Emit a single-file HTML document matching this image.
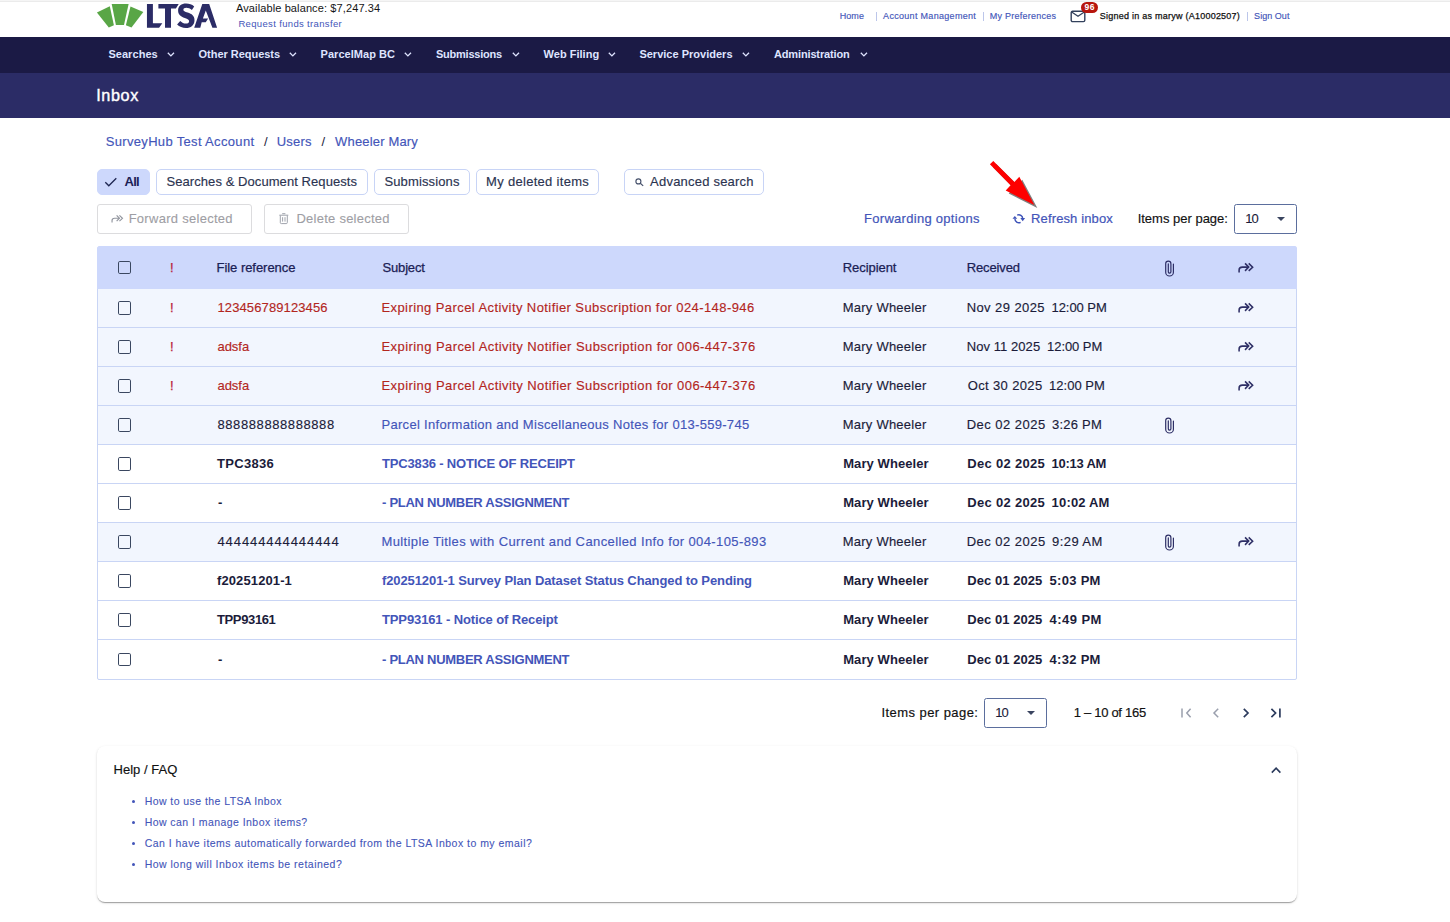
<!DOCTYPE html>
<html lang="en"><head><meta charset="utf-8"><title>Inbox</title>
<style>
html,body{margin:0;padding:0;}
body{width:1450px;height:922px;position:relative;overflow:hidden;background:#fff;font-family:"Liberation Sans",sans-serif;}
.t{position:absolute;white-space:nowrap;margin:0;padding:0;}
.a{position:absolute;box-sizing:border-box;}
svg{position:absolute;overflow:visible;}
.chip{position:absolute;box-sizing:border-box;top:169px;height:26px;border:1px solid #c8d4f6;border-radius:5px;background:#fff;}
.btn{position:absolute;box-sizing:border-box;top:204px;height:30px;border:1px solid #dcdcde;border-radius:3px;background:#fff;}
.sel{position:absolute;box-sizing:border-box;width:63px;height:30px;border:1px solid #5b6e9d;border-radius:2.5px;background:#fff;}
.cb{position:absolute;box-sizing:border-box;left:118px;width:13.4px;height:13.4px;border:1.25px solid #3a4760;border-radius:1.8px;}
.sep{position:absolute;width:1px;height:9px;top:11.5px;background:#bcc6ea;}
.row{position:absolute;left:98px;width:1198px;box-sizing:border-box;border-bottom:1px solid #c9d5f5;}

</style></head>
<body>
<div class="a" style="left:0;top:0;width:1450px;height:1px;background:#f5f5f5"></div>
<div class="a" style="left:0;top:1px;width:1450px;height:1px;background:#ebebeb"></div>
<!-- logo -->
<svg style="left:0;top:0" width="240" height="37" viewBox="0 0 240 37">
<g fill="#59a646">
<polygon points="96.9,12.4 109.8,6.3 113.9,25.3 108.8,27.5"/>
<polygon points="111.7,4.05 128.6,4.05 124.0,24.9 115.9,24.9"/>
<polygon points="130.5,6.6 143.3,12.1 131.5,27.5 125.9,25.3"/>
</g>
<g fill="#2b2c66">
<path d="M146.95,3.94 H152.9 V23.2 H162.3 L159.1,27.7 H146.95 Z"/>
<path d="M158.4,3.94 H178.7 L175.9,8.4 H171.0 V27.7 H165.0 V8.4 H158.4 Z"/>
<path id="ltsaS" d="M191.9,9.9 C190.3,8.6 188.2,7.8 186.3,7.8 C184.5,7.8 183.4,8.5 183.4,9.7 C183.4,11.1 184.8,11.6 187.6,12.6 C191.8,14 194.5,15.8 194.5,20.2 C194.5,25 190.9,28.1 185.9,28.1 C182.5,28.1 179.4,26.8 177.1,24.6 L180.2,21 C181.9,22.6 183.9,23.6 186,23.6 C187.9,23.6 189.1,22.7 189.1,21.2 C189.1,19.6 187.8,19 184.8,17.9 C180.7,16.4 178.1,14.7 178.1,10.4 C178.1,6.2 181.4,3.6 186.1,3.6 C189.2,3.6 192,4.6 194.2,6.4 Z"/>
<path d="M194.2,27.7 L202.3,3.94 H209.2 L217.1,27.7 H212.4 L205.8,10.4 L202.9,18.4 H208.1 L205.8,22.3 H201.7 L200.3,27.7 Z"/>
</g>
</svg>
<!-- header separators -->
<div class="sep" style="left:876px"></div>
<div class="sep" style="left:983px"></div>
<div class="sep" style="left:1247px"></div>
<!-- mail -->
<svg style="left:1070px;top:9.5px" width="16" height="13" viewBox="0 0 16 13">
<rect x="1.2" y="1.3" width="13.6" height="10.3" rx="1.4" fill="none" stroke="#33415c" stroke-width="1.4"/>
<path d="M1.3,1.8 L8,6.3 L14.7,1.8" fill="none" stroke="#33415c" stroke-width="1.3" stroke-linejoin="round"/>
</svg>
<div class="a" style="left:1081px;top:1.8px;width:17px;height:11px;border-radius:5.5px;background:#b7160d"></div>
<div class="t" style="left:1081px;top:1.8px;width:17px;height:11px;line-height:11px;font-size:8.5px;font-weight:700;color:#fff;text-align:center;letter-spacing:0.7px;text-indent:0.7px">96</div>
<!-- nav -->
<div class="a" style="left:0;top:37px;width:1450px;height:36px;background:#1b1a45"></div>
<div class="a" style="left:0;top:73px;width:1450px;height:45px;background:#2b2c66"></div>
<svg style="left:0;top:37px" width="900" height="36" viewBox="0 37 900 36" fill="none" stroke="#dfe4ff" stroke-width="1.3">
<path d="M167.8,52.8 l3.1,3.1 l3.1,-3.1"/>
<path d="M289.8,52.8 l3.1,3.1 l3.1,-3.1"/>
<path d="M404.8,52.8 l3.1,3.1 l3.1,-3.1"/>
<path d="M512.8,52.8 l3.1,3.1 l3.1,-3.1"/>
<path d="M608.8,52.8 l3.1,3.1 l3.1,-3.1"/>
<path d="M742.8,52.8 l3.1,3.1 l3.1,-3.1"/>
<path d="M860.8,52.8 l3.1,3.1 l3.1,-3.1"/>
</svg>
<!-- chips -->
<div class="chip" style="left:97px;width:53px;background:#cdd8fc;border-color:#cdd8fc"></div>
<svg style="left:104px;top:176px" width="14" height="12" viewBox="0 0 14 12"><path d="M1.3,6.3 L4.8,9.8 L12.3,2.3" fill="none" stroke="#1f2752" stroke-width="1.3"/></svg>
<div class="chip" style="left:156.4px;width:211.4px"></div>
<div class="chip" style="left:374.4px;width:95.4px"></div>
<div class="chip" style="left:476.4px;width:122.4px"></div>
<div class="chip" style="left:624.2px;width:139.6px"></div>
<svg style="left:634px;top:177px" width="11" height="11" viewBox="0 0 11 11" fill="none" stroke="#46516b" stroke-width="1.15"><circle cx="4.4" cy="4.4" r="2.5"/><path d="M6.3,6.3 L9.2,8.9"/></svg>
<!-- buttons -->
<div class="btn" style="left:97px;width:155px"></div>
<div class="btn" style="left:264px;width:145px"></div>
<svg style="left:110.5px;top:214px" width="15" height="11" viewBox="0 0 15 11" fill="none" stroke="#92969f" stroke-width="1.5"><g transform="translate(0.2,0.3) scale(0.77)"><path d="M1.1,10.6 V8 C1.1,6 2.4,5.1 4.4,5.1 H10.7"/><path d="M7.05,1.4 L10.7,5.1 L7.05,8.9"/><path d="M10.7,1.4 L14.65,5.2 L10.7,8.9"/></g></svg>
<svg style="left:279px;top:212.6px" width="10" height="12" viewBox="0 0 10 12" fill="none" stroke="#9fa3ac" stroke-width="1"><path d="M0.3,2.2 H9.3 M3.2,0.7 H6.4"/><path d="M1.3,2.4 V9.6 Q1.3,10.6 2.3,10.6 H7.3 Q8.3,10.6 8.3,9.6 V2.4"/><path d="M3.6,4.2 V8.6 M6,4.2 V8.6"/></svg>
<!-- refresh -->
<svg style="left:1011px;top:212px" width="16" height="14" viewBox="1011 212 16 14">
<g fill="none" stroke="#3d52b8" stroke-width="1.45"><path d="M1017.2,215.2 A3.9,3.9 0 0 1 1022.7,218.6"/><path d="M1020.6,222.3 A3.9,3.9 0 0 1 1014.9,218.8"/></g>
<g fill="#3d52b8"><polygon points="1020.3,218.1 1025.1,218.1 1022.7,221.2"/><polygon points="1012.5,218.8 1017.2,218.8 1014.8,216"/></g>
</svg>
<!-- select top -->
<div class="sel" style="left:1234px;top:204px"></div>
<svg style="left:1277px;top:216.8px" width="8" height="4" viewBox="0 0 8 4"><polygon points="0,0 8,0 4,4" fill="#3a4560"/></svg>
<!-- red arrow -->
<svg style="left:980px;top:150px;filter:drop-shadow(3px 3px 0.7px rgba(0,0,0,.5))" width="70" height="70" viewBox="980 150 70 70">
<polygon fill="#fe0000" points="993.3,161.0 1014.4,181.9 1019.3,176.8 1034.3,204.9 1005.7,190.5 1010.6,185.3 989.9,164.3"/>
</svg>
<!-- table -->
<div class="a" style="left:97px;top:246px;width:1200px;height:434px;border:1px solid #c9d5f5;border-radius:3px 3px 2px 2px;background:#fff"></div>
<div class="a" style="left:97px;top:246px;width:1200px;height:43px;background:#cdd8fc;border-radius:3px 3px 0 0;border:1px solid #cdd8fc;border-bottom:none"></div>
<div class="row" style="top:289px;height:39px;background:#f2f6fe"></div>
<div class="row" style="top:328px;height:39px;background:#f2f6fe"></div>
<div class="row" style="top:367px;height:39px;background:#f2f6fe"></div>
<div class="row" style="top:406px;height:39px;background:#f2f6fe"></div>
<div class="row" style="top:445px;height:39px;"></div>
<div class="row" style="top:484px;height:39px;"></div>
<div class="row" style="top:523px;height:39px;background:#f2f6fe"></div>
<div class="row" style="top:562px;height:39px;"></div>
<div class="row" style="top:601px;height:39px;"></div>
<!-- checkboxes -->
<div class="cb" style="top:261px"></div>
<div class="cb" style="top:301.3px"></div>
<div class="cb" style="top:340.3px"></div>
<div class="cb" style="top:379.3px"></div>
<div class="cb" style="top:418.3px"></div>
<div class="cb" style="top:457.3px"></div>
<div class="cb" style="top:496.3px"></div>
<div class="cb" style="top:535.3px"></div>
<div class="cb" style="top:574.3px"></div>
<div class="cb" style="top:613.3px"></div>
<div class="cb" style="top:653px"></div>
<!-- table icons -->
<svg style="left:0;top:0" width="1450" height="700" viewBox="0 0 1450 700" fill="none" stroke="#2e2f66">
<path transform="translate(1164,260.2)" stroke-width="1.2" stroke-linecap="round" d="M9.4,3.9 V11.95 A3.85,3.85 0 0 1 1.7,11.95 V3.5 A2.6,2.6 0 0 1 6.9,3.5 V11.6 A1.3,1.3 0 0 1 4.3,11.6 V3.6"/>
<g transform="translate(1238,262)" stroke-width="1.55"><path d="M1.1,10.6 V8 C1.1,6 2.4,5.1 4.4,5.1 H10.7"/><path d="M7.05,1.4 L10.7,5.1 L7.05,8.9"/><path d="M10.7,1.4 L14.65,5.2 L10.7,8.9"/></g>
<g transform="translate(1238,302)" stroke-width="1.55"><path d="M1.1,10.6 V8 C1.1,6 2.4,5.1 4.4,5.1 H10.7"/><path d="M7.05,1.4 L10.7,5.1 L7.05,8.9"/><path d="M10.7,1.4 L14.65,5.2 L10.7,8.9"/></g>
<g transform="translate(1238,341)" stroke-width="1.55"><path d="M1.1,10.6 V8 C1.1,6 2.4,5.1 4.4,5.1 H10.7"/><path d="M7.05,1.4 L10.7,5.1 L7.05,8.9"/><path d="M10.7,1.4 L14.65,5.2 L10.7,8.9"/></g>
<g transform="translate(1238,380)" stroke-width="1.55"><path d="M1.1,10.6 V8 C1.1,6 2.4,5.1 4.4,5.1 H10.7"/><path d="M7.05,1.4 L10.7,5.1 L7.05,8.9"/><path d="M10.7,1.4 L14.65,5.2 L10.7,8.9"/></g>
<path transform="translate(1164,417.2)" stroke-width="1.2" stroke-linecap="round" d="M9.4,3.9 V11.95 A3.85,3.85 0 0 1 1.7,11.95 V3.5 A2.6,2.6 0 0 1 6.9,3.5 V11.6 A1.3,1.3 0 0 1 4.3,11.6 V3.6"/>
<path transform="translate(1164,534.2)" stroke-width="1.2" stroke-linecap="round" d="M9.4,3.9 V11.95 A3.85,3.85 0 0 1 1.7,11.95 V3.5 A2.6,2.6 0 0 1 6.9,3.5 V11.6 A1.3,1.3 0 0 1 4.3,11.6 V3.6"/>
<g transform="translate(1238,536)" stroke-width="1.55"><path d="M1.1,10.6 V8 C1.1,6 2.4,5.1 4.4,5.1 H10.7"/><path d="M7.05,1.4 L10.7,5.1 L7.05,8.9"/><path d="M10.7,1.4 L14.65,5.2 L10.7,8.9"/></g>
</svg>
<!-- paginator -->
<div class="sel" style="left:984px;top:698px"></div>
<svg style="left:1027px;top:710.8px" width="8" height="4" viewBox="0 0 8 4"><polygon points="0,0 8,0 4,4" fill="#3a4560"/></svg>
<svg style="left:1170px;top:700px" width="120" height="26" viewBox="1170 700 120 26" fill="none" stroke-width="1.5">
<g stroke="#9a9fad"><path d="M1182,708.5 V717.4"/><path d="M1190.6,708.8 L1186.8,713 L1190.6,717.2"/><path d="M1218.2,708.8 L1214,713 L1218.2,717.2"/></g>
<g stroke="#2b3a5c" stroke-width="1.7"><path d="M1243.8,708.8 L1248,713 L1243.8,717.2"/><path d="M1271.4,708.8 L1275.6,713 L1271.4,717.2"/><path d="M1279.9,708.5 V717.4"/></g>
</svg>
<!-- FAQ -->
<div class="a" style="left:97px;top:746px;width:1200px;height:156px;border-radius:8px;background:#fff;box-shadow:0 2px 1px -1px rgba(0,0,0,.2),0 1px 1px 0 rgba(0,0,0,.14),0 1px 3px 0 rgba(0,0,0,.12)"></div>
<svg style="left:1270px;top:765px" width="12" height="10" viewBox="1270 765 12 10" fill="none" stroke="#2b3a5c" stroke-width="1.6"><path d="M1271.8,772.6 L1276.1,768.2 L1280.4,772.6"/></svg>
<div class="a" style="left:132px;top:799.6px;width:3.4px;height:3.4px;border-radius:50%;background:#4355b9"></div>
<div class="a" style="left:132px;top:820.6px;width:3.4px;height:3.4px;border-radius:50%;background:#4355b9"></div>
<div class="a" style="left:132px;top:841.6px;width:3.4px;height:3.4px;border-radius:50%;background:#4355b9"></div>
<div class="a" style="left:132px;top:862.6px;width:3.4px;height:3.4px;border-radius:50%;background:#4355b9"></div>

<div class="t" style="left:236.00px;top:0.19px;height:16px;line-height:16px;font-size:11px;color:#151515;letter-spacing:0.113px;">Available balance: $7,247.34</div>
<div class="t" style="left:238.40px;top:16.71px;height:14px;line-height:14px;font-size:9.5px;color:#4355b9;letter-spacing:0.345px;">Request funds transfer</div>
<div class="t" style="left:839.68px;top:8.88px;height:14px;line-height:14px;font-size:9px;color:#4355b9;-webkit-text-stroke:0.15px #4355b9;letter-spacing:0.080px;">Home</div>
<div class="t" style="left:883.08px;top:8.88px;height:14px;line-height:14px;font-size:9px;color:#4355b9;-webkit-text-stroke:0.15px #4355b9;letter-spacing:0.305px;">Account Management</div>
<div class="t" style="left:989.68px;top:8.88px;height:14px;line-height:14px;font-size:9px;color:#4355b9;-webkit-text-stroke:0.15px #4355b9;letter-spacing:0.255px;">My Preferences</div>
<div class="t" style="left:1099.72px;top:8.88px;height:14px;line-height:14px;font-size:9px;color:#111;-webkit-text-stroke:0.25px #111;letter-spacing:0.244px;">Signed in as maryw (A10002507)</div>
<div class="t" style="left:1254.08px;top:8.88px;height:14px;line-height:14px;font-size:9px;color:#4355b9;-webkit-text-stroke:0.15px #4355b9;letter-spacing:0.046px;">Sign Out</div>
<div class="t" style="left:108.40px;top:46.19px;height:16px;line-height:16px;font-size:11px;color:#dfe4ff;font-weight:700;letter-spacing:0.054px;">Searches</div>
<div class="t" style="left:198.60px;top:46.19px;height:16px;line-height:16px;font-size:11px;color:#dfe4ff;font-weight:700;letter-spacing:-0.031px;">Other Requests</div>
<div class="t" style="left:320.60px;top:46.19px;height:16px;line-height:16px;font-size:11px;color:#dfe4ff;font-weight:700;letter-spacing:0.033px;">ParcelMap BC</div>
<div class="t" style="left:436.00px;top:46.19px;height:16px;line-height:16px;font-size:11px;color:#dfe4ff;font-weight:700;letter-spacing:-0.235px;">Submissions</div>
<div class="t" style="left:543.60px;top:46.19px;height:16px;line-height:16px;font-size:11px;color:#dfe4ff;font-weight:700;letter-spacing:0.013px;">Web Filing</div>
<div class="t" style="left:639.40px;top:46.19px;height:16px;line-height:16px;font-size:11px;color:#dfe4ff;font-weight:700;letter-spacing:0.010px;">Service Providers</div>
<div class="t" style="left:774.00px;top:46.19px;height:16px;line-height:16px;font-size:11px;color:#dfe4ff;font-weight:700;letter-spacing:-0.147px;">Administration</div>
<div class="t" style="left:96.20px;top:82.89px;height:24px;line-height:24px;font-size:16.2px;color:#fff;-webkit-text-stroke:0.4px #fff;letter-spacing:0.621px;">Inbox</div>
<div class="t" style="left:105.67px;top:131.50px;height:20px;line-height:20px;font-size:13px;color:#4355b9;-webkit-text-stroke:0.15px #4355b9;letter-spacing:0.336px;">SurveyHub Test Account</div>
<div class="t" style="left:264.00px;top:131.50px;height:20px;line-height:20px;font-size:13px;color:#1b1c3a;letter-spacing:0.000px;">/</div>
<div class="t" style="left:276.68px;top:131.50px;height:20px;line-height:20px;font-size:13px;color:#4355b9;-webkit-text-stroke:0.15px #4355b9;letter-spacing:0.199px;">Users</div>
<div class="t" style="left:321.60px;top:131.50px;height:20px;line-height:20px;font-size:13px;color:#1b1c3a;letter-spacing:0.000px;">/</div>
<div class="t" style="left:335.07px;top:131.50px;height:20px;line-height:20px;font-size:13px;color:#4355b9;-webkit-text-stroke:0.15px #4355b9;letter-spacing:0.166px;">Wheeler Mary</div>
<div class="t" style="left:124.60px;top:172.00px;height:20px;line-height:20px;font-size:13px;color:#1b2155;font-weight:700;letter-spacing:-0.807px;">All</div>
<div class="t" style="left:166.47px;top:172.00px;height:20px;line-height:20px;font-size:13px;color:#2b3350;-webkit-text-stroke:0.15px #2b3350;letter-spacing:0.072px;">Searches &amp; Document Requests</div>
<div class="t" style="left:384.47px;top:172.00px;height:20px;line-height:20px;font-size:13px;color:#2b3350;-webkit-text-stroke:0.15px #2b3350;letter-spacing:0.125px;">Submissions</div>
<div class="t" style="left:486.07px;top:172.00px;height:20px;line-height:20px;font-size:13px;color:#2b3350;-webkit-text-stroke:0.15px #2b3350;letter-spacing:0.299px;">My deleted items</div>
<div class="t" style="left:650.08px;top:172.00px;height:20px;line-height:20px;font-size:13px;color:#2b3350;-webkit-text-stroke:0.15px #2b3350;letter-spacing:0.216px;">Advanced search</div>
<div class="t" style="left:128.65px;top:208.50px;height:20px;line-height:20px;font-size:13px;color:#9e9ea4;-webkit-text-stroke:0.1px #9e9ea4;letter-spacing:0.281px;">Forward selected</div>
<div class="t" style="left:296.45px;top:208.50px;height:20px;line-height:20px;font-size:13px;color:#9e9ea4;-webkit-text-stroke:0.1px #9e9ea4;letter-spacing:0.250px;">Delete selected</div>
<div class="t" style="left:864.10px;top:208.50px;height:20px;line-height:20px;font-size:13px;color:#4355b9;-webkit-text-stroke:0.2px #4355b9;letter-spacing:0.279px;">Forwarding options</div>
<div class="t" style="left:1031.10px;top:208.50px;height:20px;line-height:20px;font-size:13px;color:#4355b9;-webkit-text-stroke:0.2px #4355b9;letter-spacing:0.123px;">Refresh inbox</div>
<div class="t" style="left:1137.67px;top:208.50px;height:20px;line-height:20px;font-size:13px;color:#111;-webkit-text-stroke:0.15px #111;letter-spacing:-0.005px;">Items per page:</div>
<div class="t" style="left:1245.25px;top:208.50px;height:20px;line-height:20px;font-size:13px;color:#1b1c3a;-webkit-text-stroke:0.1px #1b1c3a;letter-spacing:-0.939px;">10</div>
<div class="t" style="left:170.12px;top:257.50px;height:20px;line-height:20px;font-size:13px;color:#b81c3a;-webkit-text-stroke:0.25px #b81c3a;letter-spacing:0.000px;">!</div>
<div class="t" style="left:216.53px;top:257.50px;height:20px;line-height:20px;font-size:13px;color:#1b2155;-webkit-text-stroke:0.25px #1b2155;letter-spacing:-0.039px;">File reference</div>
<div class="t" style="left:382.52px;top:257.50px;height:20px;line-height:20px;font-size:13px;color:#1b2155;-webkit-text-stroke:0.25px #1b2155;letter-spacing:-0.169px;">Subject</div>
<div class="t" style="left:842.73px;top:257.50px;height:20px;line-height:20px;font-size:13px;color:#1b2155;-webkit-text-stroke:0.25px #1b2155;letter-spacing:-0.055px;">Recipient</div>
<div class="t" style="left:966.73px;top:257.50px;height:20px;line-height:20px;font-size:13px;color:#1b2155;-webkit-text-stroke:0.25px #1b2155;letter-spacing:-0.118px;">Received</div>
<div class="t" style="left:170.12px;top:298.10px;height:20px;line-height:20px;font-size:13px;color:#b81c3a;-webkit-text-stroke:0.25px #b81c3a;letter-spacing:0.000px;">!</div>
<div class="t" style="left:217.47px;top:298.10px;height:20px;line-height:20px;font-size:13px;color:#b3261e;-webkit-text-stroke:0.15px #b3261e;letter-spacing:0.116px;">123456789123456</div>
<div class="t" style="left:381.47px;top:298.10px;height:20px;line-height:20px;font-size:13px;color:#b3261e;-webkit-text-stroke:0.15px #b3261e;letter-spacing:0.412px;">Expiring Parcel Activity Notifier Subscription for 024-148-946</div>
<div class="t" style="left:842.68px;top:298.10px;height:20px;line-height:20px;font-size:13px;color:#1b1c3a;-webkit-text-stroke:0.15px #1b1c3a;letter-spacing:0.242px;">Mary Wheeler</div>
<div class="t" style="left:966.68px;top:298.10px;height:20px;line-height:20px;font-size:13px;color:#1b1c3a;-webkit-text-stroke:0.15px #1b1c3a;letter-spacing:0.415px;">Nov 29 2025</div>
<div class="t" style="left:1051.48px;top:298.10px;height:20px;line-height:20px;font-size:13px;color:#1b1c3a;-webkit-text-stroke:0.15px #1b1c3a;letter-spacing:-0.054px;">12:00 PM</div>
<div class="t" style="left:170.12px;top:337.10px;height:20px;line-height:20px;font-size:13px;color:#b81c3a;-webkit-text-stroke:0.25px #b81c3a;letter-spacing:0.000px;">!</div>
<div class="t" style="left:217.47px;top:337.10px;height:20px;line-height:20px;font-size:13px;color:#b3261e;-webkit-text-stroke:0.15px #b3261e;letter-spacing:-0.033px;">adsfa</div>
<div class="t" style="left:381.47px;top:337.10px;height:20px;line-height:20px;font-size:13px;color:#b3261e;-webkit-text-stroke:0.15px #b3261e;letter-spacing:0.428px;">Expiring Parcel Activity Notifier Subscription for 006-447-376</div>
<div class="t" style="left:842.68px;top:337.10px;height:20px;line-height:20px;font-size:13px;color:#1b1c3a;-webkit-text-stroke:0.15px #1b1c3a;letter-spacing:0.242px;">Mary Wheeler</div>
<div class="t" style="left:966.68px;top:337.10px;height:20px;line-height:20px;font-size:13px;color:#1b1c3a;-webkit-text-stroke:0.15px #1b1c3a;letter-spacing:0.071px;">Nov 11 2025</div>
<div class="t" style="left:1047.08px;top:337.10px;height:20px;line-height:20px;font-size:13px;color:#1b1c3a;-webkit-text-stroke:0.15px #1b1c3a;letter-spacing:-0.068px;">12:00 PM</div>
<div class="t" style="left:170.12px;top:376.10px;height:20px;line-height:20px;font-size:13px;color:#b81c3a;-webkit-text-stroke:0.25px #b81c3a;letter-spacing:0.000px;">!</div>
<div class="t" style="left:217.47px;top:376.10px;height:20px;line-height:20px;font-size:13px;color:#b3261e;-webkit-text-stroke:0.15px #b3261e;letter-spacing:-0.033px;">adsfa</div>
<div class="t" style="left:381.47px;top:376.10px;height:20px;line-height:20px;font-size:13px;color:#b3261e;-webkit-text-stroke:0.15px #b3261e;letter-spacing:0.428px;">Expiring Parcel Activity Notifier Subscription for 006-447-376</div>
<div class="t" style="left:842.68px;top:376.10px;height:20px;line-height:20px;font-size:13px;color:#1b1c3a;-webkit-text-stroke:0.15px #1b1c3a;letter-spacing:0.242px;">Mary Wheeler</div>
<div class="t" style="left:967.68px;top:376.10px;height:20px;line-height:20px;font-size:13px;color:#1b1c3a;-webkit-text-stroke:0.15px #1b1c3a;letter-spacing:0.365px;">Oct 30 2025</div>
<div class="t" style="left:1049.08px;top:376.10px;height:20px;line-height:20px;font-size:13px;color:#1b1c3a;-webkit-text-stroke:0.15px #1b1c3a;letter-spacing:0.003px;">12:00 PM</div>
<div class="t" style="left:217.47px;top:415.10px;height:20px;line-height:20px;font-size:13px;color:#1b1c3a;-webkit-text-stroke:0.15px #1b1c3a;letter-spacing:0.588px;">888888888888888</div>
<div class="t" style="left:381.47px;top:415.10px;height:20px;line-height:20px;font-size:13px;color:#4355b9;-webkit-text-stroke:0.15px #4355b9;letter-spacing:0.302px;">Parcel Information and Miscellaneous Notes for 013-559-745</div>
<div class="t" style="left:842.68px;top:415.10px;height:20px;line-height:20px;font-size:13px;color:#1b1c3a;-webkit-text-stroke:0.15px #1b1c3a;letter-spacing:0.242px;">Mary Wheeler</div>
<div class="t" style="left:966.68px;top:415.10px;height:20px;line-height:20px;font-size:13px;color:#1b1c3a;-webkit-text-stroke:0.15px #1b1c3a;letter-spacing:0.475px;">Dec 02 2025</div>
<div class="t" style="left:1052.08px;top:415.10px;height:20px;line-height:20px;font-size:13px;color:#1b1c3a;-webkit-text-stroke:0.15px #1b1c3a;letter-spacing:0.210px;">3:26 PM</div>
<div class="t" style="left:217.00px;top:454.10px;height:20px;line-height:20px;font-size:13px;color:#1b1c3a;font-weight:700;letter-spacing:0.318px;">TPC3836</div>
<div class="t" style="left:382.00px;top:454.10px;height:20px;line-height:20px;font-size:13px;color:#4355b9;font-weight:700;letter-spacing:-0.160px;">TPC3836 - NOTICE OF RECEIPT</div>
<div class="t" style="left:843.20px;top:454.10px;height:20px;line-height:20px;font-size:13px;color:#1b1c3a;font-weight:700;letter-spacing:0.083px;">Mary Wheeler</div>
<div class="t" style="left:967.20px;top:454.10px;height:20px;line-height:20px;font-size:13px;color:#1b1c3a;font-weight:700;letter-spacing:0.318px;">Dec 02 2025</div>
<div class="t" style="left:1051.60px;top:454.10px;height:20px;line-height:20px;font-size:13px;color:#1b1c3a;font-weight:700;letter-spacing:-0.254px;">10:13 AM</div>
<div class="t" style="left:218.10px;top:493.10px;height:20px;line-height:20px;font-size:13px;color:#1b1c3a;font-weight:700;letter-spacing:0.000px;">-</div>
<div class="t" style="left:382.00px;top:493.10px;height:20px;line-height:20px;font-size:13px;color:#4355b9;font-weight:700;letter-spacing:-0.272px;">- PLAN NUMBER ASSIGNMENT</div>
<div class="t" style="left:843.20px;top:493.10px;height:20px;line-height:20px;font-size:13px;color:#1b1c3a;font-weight:700;letter-spacing:0.083px;">Mary Wheeler</div>
<div class="t" style="left:967.20px;top:493.10px;height:20px;line-height:20px;font-size:13px;color:#1b1c3a;font-weight:700;letter-spacing:0.318px;">Dec 02 2025</div>
<div class="t" style="left:1051.60px;top:493.10px;height:20px;line-height:20px;font-size:13px;color:#1b1c3a;font-weight:700;letter-spacing:0.174px;">10:02 AM</div>
<div class="t" style="left:217.47px;top:532.10px;height:20px;line-height:20px;font-size:13px;color:#1b1c3a;-webkit-text-stroke:0.15px #1b1c3a;letter-spacing:0.909px;">444444444444444</div>
<div class="t" style="left:381.47px;top:532.10px;height:20px;line-height:20px;font-size:13px;color:#4355b9;-webkit-text-stroke:0.15px #4355b9;letter-spacing:0.388px;">Multiple Titles with Current and Cancelled Info for 004-105-893</div>
<div class="t" style="left:842.68px;top:532.10px;height:20px;line-height:20px;font-size:13px;color:#1b1c3a;-webkit-text-stroke:0.15px #1b1c3a;letter-spacing:0.242px;">Mary Wheeler</div>
<div class="t" style="left:966.68px;top:532.10px;height:20px;line-height:20px;font-size:13px;color:#1b1c3a;-webkit-text-stroke:0.15px #1b1c3a;letter-spacing:0.475px;">Dec 02 2025</div>
<div class="t" style="left:1052.08px;top:532.10px;height:20px;line-height:20px;font-size:13px;color:#1b1c3a;-webkit-text-stroke:0.15px #1b1c3a;letter-spacing:0.413px;">9:29 AM</div>
<div class="t" style="left:217.00px;top:571.10px;height:20px;line-height:20px;font-size:13px;color:#1b1c3a;font-weight:700;letter-spacing:0.110px;">f20251201-1</div>
<div class="t" style="left:382.00px;top:571.10px;height:20px;line-height:20px;font-size:13px;color:#4355b9;font-weight:700;letter-spacing:-0.101px;">f20251201-1 Survey Plan Dataset Status Changed to Pending</div>
<div class="t" style="left:843.20px;top:571.10px;height:20px;line-height:20px;font-size:13px;color:#1b1c3a;font-weight:700;letter-spacing:0.083px;">Mary Wheeler</div>
<div class="t" style="left:967.20px;top:571.10px;height:20px;line-height:20px;font-size:13px;color:#1b1c3a;font-weight:700;letter-spacing:0.068px;">Dec 01 2025</div>
<div class="t" style="left:1049.60px;top:571.10px;height:20px;line-height:20px;font-size:13px;color:#1b1c3a;font-weight:700;letter-spacing:0.281px;">5:03 PM</div>
<div class="t" style="left:217.00px;top:610.10px;height:20px;line-height:20px;font-size:13px;color:#1b1c3a;font-weight:700;letter-spacing:-0.373px;">TPP93161</div>
<div class="t" style="left:382.00px;top:610.10px;height:20px;line-height:20px;font-size:13px;color:#4355b9;font-weight:700;letter-spacing:-0.120px;">TPP93161 - Notice of Receipt</div>
<div class="t" style="left:843.20px;top:610.10px;height:20px;line-height:20px;font-size:13px;color:#1b1c3a;font-weight:700;letter-spacing:0.083px;">Mary Wheeler</div>
<div class="t" style="left:967.20px;top:610.10px;height:20px;line-height:20px;font-size:13px;color:#1b1c3a;font-weight:700;letter-spacing:0.068px;">Dec 01 2025</div>
<div class="t" style="left:1049.60px;top:610.10px;height:20px;line-height:20px;font-size:13px;color:#1b1c3a;font-weight:700;letter-spacing:0.448px;">4:49 PM</div>
<div class="t" style="left:218.10px;top:649.60px;height:20px;line-height:20px;font-size:13px;color:#1b1c3a;font-weight:700;letter-spacing:0.000px;">-</div>
<div class="t" style="left:382.00px;top:649.60px;height:20px;line-height:20px;font-size:13px;color:#4355b9;font-weight:700;letter-spacing:-0.272px;">- PLAN NUMBER ASSIGNMENT</div>
<div class="t" style="left:843.20px;top:649.60px;height:20px;line-height:20px;font-size:13px;color:#1b1c3a;font-weight:700;letter-spacing:0.083px;">Mary Wheeler</div>
<div class="t" style="left:967.20px;top:649.60px;height:20px;line-height:20px;font-size:13px;color:#1b1c3a;font-weight:700;letter-spacing:0.068px;">Dec 01 2025</div>
<div class="t" style="left:1049.60px;top:649.60px;height:20px;line-height:20px;font-size:13px;color:#1b1c3a;font-weight:700;letter-spacing:0.281px;">4:32 PM</div>
<div class="t" style="left:881.49px;top:702.50px;height:20px;line-height:20px;font-size:13px;color:#111;-webkit-text-stroke:0.18px #111;letter-spacing:0.436px;">Items per page:</div>
<div class="t" style="left:995.25px;top:702.50px;height:20px;line-height:20px;font-size:13px;color:#1b1c3a;-webkit-text-stroke:0.1px #1b1c3a;letter-spacing:-0.939px;">10</div>
<div class="t" style="left:1073.69px;top:702.50px;height:20px;line-height:20px;font-size:13px;color:#111;-webkit-text-stroke:0.18px #111;letter-spacing:-0.288px;">1 – 10 of 165</div>
<div class="t" style="left:113.48px;top:759.90px;height:20px;line-height:20px;font-size:13px;color:#111;-webkit-text-stroke:0.15px #111;letter-spacing:0.043px;">Help / FAQ</div>
<div class="t" style="left:144.65px;top:793.36px;height:16px;line-height:16px;font-size:10.5px;color:#4355b9;-webkit-text-stroke:0.1px #4355b9;letter-spacing:0.437px;">How to use the LTSA Inbox</div>
<div class="t" style="left:144.65px;top:814.36px;height:16px;line-height:16px;font-size:10.5px;color:#4355b9;-webkit-text-stroke:0.1px #4355b9;letter-spacing:0.448px;">How can I manage Inbox items?</div>
<div class="t" style="left:144.65px;top:835.36px;height:16px;line-height:16px;font-size:10.5px;color:#4355b9;-webkit-text-stroke:0.1px #4355b9;letter-spacing:0.476px;">Can I have items automatically forwarded from the LTSA Inbox to my email?</div>
<div class="t" style="left:144.65px;top:856.36px;height:16px;line-height:16px;font-size:10.5px;color:#4355b9;-webkit-text-stroke:0.1px #4355b9;letter-spacing:0.485px;">How long will Inbox items be retained?</div>
</body></html>
